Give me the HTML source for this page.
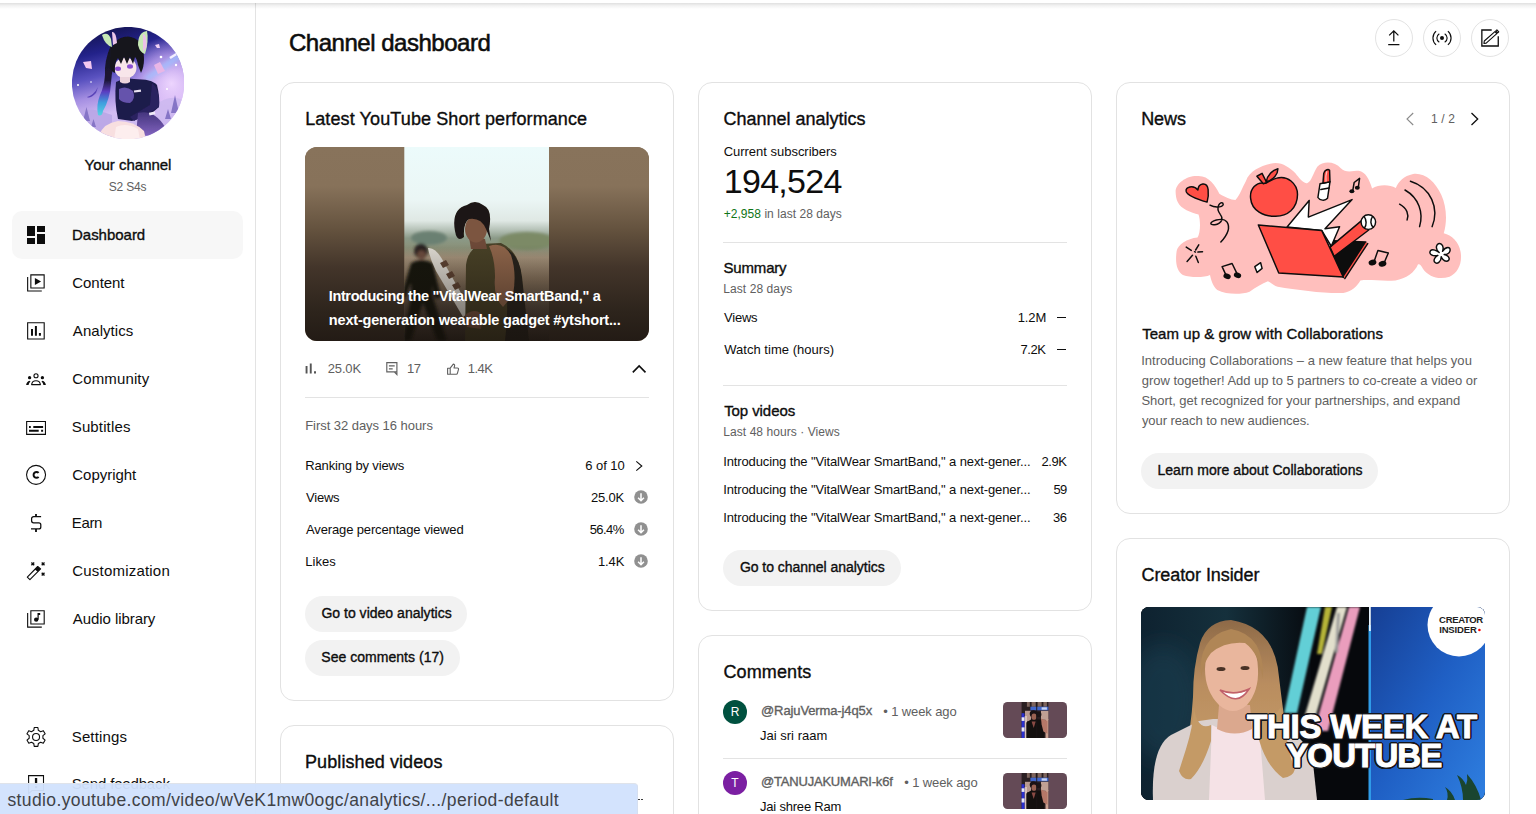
<!DOCTYPE html>
<html lang="en">
<head>
<meta charset="utf-8">
<title>Channel dashboard - YouTube Studio</title>
<style>
*{box-sizing:border-box;margin:0;padding:0}
html,body{width:1536px;height:814px;overflow:hidden;background:#fff}
body{font-family:"Liberation Sans",sans-serif;color:#0d0d0d;position:relative;font-size:13px}
.abs{position:absolute}
.t{position:absolute;white-space:nowrap}
.m{-webkit-text-stroke:0.35px currentColor}
.g{color:#606060}
.b{font-weight:bold}
.w{color:#fff}
.topshadow{position:absolute;left:0;top:3px;width:1536px;height:6px;background:linear-gradient(rgba(0,0,0,0.12),rgba(0,0,0,0.05) 45%,rgba(0,0,0,0))}
.side{position:absolute;left:0;top:3px;width:256px;height:811px;border-right:1px solid #e3e3e3;background:#fff}
.nav{position:absolute;left:12px;width:231px;height:48px;border-radius:10px}
.nav.sel{background:#f7f7f7}
.nav svg{position:absolute;left:12px;top:12px;width:24px;height:24px}
.card{position:absolute;width:394px;border:1px solid #e2e2e2;border-radius:14px;background:#fff}
.btn{position:absolute;height:36px;border-radius:18px;background:#f2f2f2}
.hr{position:absolute;height:1px;background:#e3e3e3}
.circ{position:absolute;width:38px;height:38px;border-radius:50%;border:1px solid #e3e3e3;top:19px}
.circ svg{position:absolute;left:6px;top:6px;width:24px;height:24px}
.status{position:absolute;left:0;top:783px;width:638px;height:31px;background:rgba(209,226,253,0.955);border-top:1px solid #dfe3ea;border-right:1px solid #d5dff0;border-top-right-radius:4px;z-index:5}
.cav{position:absolute;left:723px;width:24px;height:24px;border-radius:50%;color:#fff;text-align:center;line-height:24px;font-size:12px}

</style>
</head>
<body>
<div class="side">
<svg class="abs" style="left:72px;top:24px" width="112" height="112" viewBox="0 0 112 112">
<defs>
<clipPath id="avc"><circle cx="56.100" cy="56.100" r="56.200"/></clipPath>
<linearGradient id="avbg" x1="0.2" y1="0" x2="0.45" y2="1">
<stop offset="0" stop-color="#12124a"/><stop offset="0.22" stop-color="#23228a"/><stop offset="0.42" stop-color="#5a52c0"/><stop offset="0.58" stop-color="#a58fe2"/><stop offset="0.75" stop-color="#d3bdf3"/><stop offset="1" stop-color="#c9b6ee"/>
</linearGradient>
<radialGradient id="avglow" cx="0.88" cy="0.5" r="0.42"><stop offset="0" stop-color="#f0d8ff" stop-opacity="0.95"/><stop offset="0.6" stop-color="#d6b4f6" stop-opacity="0.6"/><stop offset="1" stop-color="#c9a8f5" stop-opacity="0"/></radialGradient>
<linearGradient id="avhair" x1="0" y1="0" x2="0" y2="1"><stop offset="0" stop-color="#14121e"/><stop offset="0.5" stop-color="#1c1838"/><stop offset="0.66" stop-color="#5a3cc0"/><stop offset="0.82" stop-color="#3f9ede"/><stop offset="1" stop-color="#58d2e2"/></linearGradient>
<linearGradient id="avskirt" x1="0" y1="0" x2="0" y2="1"><stop offset="0" stop-color="#45357e"/><stop offset="1" stop-color="#8466c2"/></linearGradient>
<filter id="avb" x="-10%%" y="-10%%" width="120%%" height="120%%"><feGaussianBlur stdDeviation="0.550"/></filter>
<filter id="avb2" x="-30%%" y="-30%%" width="160%%" height="160%%"><feGaussianBlur stdDeviation="2.200"/></filter>
</defs>
<g clip-path="url(#avc)">
<rect width="113" height="113" fill="url(#avbg)"/>
<rect width="113" height="113" fill="url(#avglow)"/>
<path d="M72 50 Q88 40 100 30 Q106 26 112 22 L112 30 Q96 40 76 54Z" fill="#9fc0ff" opacity="0.8" filter="url(#avb2)"/>
<path d="M98 31 Q104 27 110 24" stroke="#f4f0ff" stroke-width="2.500" fill="none" filter="url(#avb)"/>
<path d="M0 86 Q16 78 40 88 L40 113 L0 113Z" fill="#b9a6e6" opacity="0.9"/>
<path d="M84 78 Q98 66 113 74 L113 113 L84 113Z" fill="#cdb9ef" opacity="0.9"/>
<g filter="url(#avb)">
<path d="M11 94 l3.500 -14 l3.500 14z M19 100 l2.500 -8 l2.500 8z M99 86 l4 -18 l4 18z M93 92 l3 -10 l3 10z M4 100 l2 -7 l2 7z" fill="#8675c6"/>
<path d="M39 18 Q32 34 33 48 Q32 60 28 68 Q24 78 26 88 Q30 90 31 84 Q38 72 39 56 Q40 40 45 26Z" fill="url(#avhair)"/>
<path d="M24 66 Q18 72 15 70 Q22 68 26 60Z" fill="#5a44b8"/>
<path d="M44 55 Q54 50 62 52 Q80 52 85 58 Q88 70 87 80 L80 86 L66 92 L60 94 L46 92 Q42 74 44 55Z" fill="#1f1a4c"/>
<path d="M47 62 Q54 58 61 64 Q64 72 58 76 Q50 76 47 72Z" fill="#6553ac"/>
<path d="M80 56 Q88 62 87 80 L62 94 L58 90 L78 78Z" fill="#2a2260"/>
<path d="M66 86 Q82 82 93 100 L90 110 L64 108Z" fill="url(#avskirt)"/>
<rect x="77" y="85" width="6" height="3" fill="#efeaf6" transform="rotate(-12 80 86)"/>
<rect x="62" y="63" width="7" height="2.200" fill="#e9e4f2" transform="rotate(-8 65 64)"/>
<path d="M27 108 Q32 96 46 94 Q62 94 72 104 L74 113 L28 113Z" fill="#f8dfe0"/>
<path d="M44 100 Q54 95 66 102 L68 113 L42 113Z" fill="#fdeeee"/>
<ellipse cx="53.500" cy="41" rx="11" ry="10.500" fill="#f8e6ea"/>
<path d="M48 50 L58 50 L58 55 Q53 58 48 55Z" fill="#ecd4dc"/>
<path d="M38 34 Q38 10 56 9.500 Q72 11 72 32 Q72 40 69 46 L66 38 Q65 32 63 30 L61 37 L58 30 L55 37 L52 30 L49 37 L46 31 Q42 36 43 46 Q37 44 38 34Z" fill="#15131f"/>
<ellipse cx="46" cy="41.700" rx="3" ry="2.200" fill="#8a4fd2"/><ellipse cx="58" cy="39.500" rx="3" ry="2.200" fill="#8a4fd2"/>
<path d="M30 8 Q36 4 39 12 L40 20 Q33 18 30 8Z" fill="#c7e8b6"/><path d="M40 5 Q44 4 45 16 L41 18Z" fill="#ecc6ea"/>
<path d="M66 18 Q66 5 75 4 Q77 14 73 27 Q68 26 66 18Z" fill="#c6e8b4"/><path d="M71 7 Q75 7 74.500 20 L71 25Z" fill="#ebc0e8"/>
<path d="M11 35 L19 34 L20 42 L14 41Z M16 38 L12 33" fill="#f4c8f0"/><path d="M82 38 L88 35 L93 44 L86 47Z" fill="#e9b6e6"/>
<path d="M83 18 l4 -1 l1 4 l-3 0z" fill="#f0d0f4"/>
</g>
<circle cx="89" cy="30" r="1.300" fill="#fff"/><circle cx="6" cy="58" r="1" fill="#fff"/><circle cx="19" cy="55" r="0.800" fill="#fff"/><circle cx="95" cy="62" r="1" fill="#fff"/><circle cx="104" cy="38" r="1.200" fill="#fff"/>
</g>
</svg>
<div class="nav sel" style="top:208px"><svg viewBox="0 0 24 24"><path d="M3 13h8V3H3v10zm0 8h8v-6H3v6zm10 0h8V11h-8v10zm0-18v6h8V3h-8z" fill="#0d0d0d"/></svg></div>
<div class="nav" style="top:256px"><svg viewBox="0 0 24 24"><path d="M6.850 3.850h13.300v13.150h-13.300z" fill="none" stroke="#0d0d0d" stroke-width="1.1"/><path d="M3.650 6v14h14.150" fill="none" stroke="#0d0d0d" stroke-width="1.1"/><path d="M10.900 7v6.900l6.200-3.450z" fill="#0d0d0d"/></svg></div>
<div class="nav" style="top:304px"><svg viewBox="0 0 24 24"><path d="M3.650 3.750h16.550v16.200h-16.550z" fill="none" stroke="#0d0d0d" stroke-width="1.1"/><path d="M7 9.900h2v6.800H7zM10.900 7.100h2v9.600h-2zM14.900 14.100h2v2.600h-2z" fill="#0d0d0d"/></svg></div>
<div class="nav" style="top:352px"><svg viewBox="0 0 24 24"><circle cx="12" cy="8.750" r="2.050" fill="none" stroke="#0d0d0d" stroke-width="1.1"/><path d="M7.600 17.600c.3-2.500 2-3.900 4.400-3.900s4.100 1.400 4.400 3.900z" fill="none" stroke="#0d0d0d" stroke-width="1.1" stroke-linejoin="round"/><circle cx="5.600" cy="10.700" r="1.650" fill="#0d0d0d"/><circle cx="18.400" cy="10.700" r="1.650" fill="#0d0d0d"/><path d="M2.100 18.100c.3-2.300 1.600-3.800 3.500-4.300l.9 1c-1 .7-1.700 1.800-1.900 3.300zM21.900 18.100c-.3-2.300-1.600-3.800-3.500-4.300l-.9 1c1 .7 1.700 1.800 1.900 3.300z" fill="#0d0d0d"/></svg></div>
<div class="nav" style="top:400px"><svg viewBox="0 0 24 24"><path d="M2.650 6.450h18.800v12.900h-18.800z" fill="none" stroke="#0d0d0d" stroke-width="1.1"/><path d="M5 11h1.800v2H5zM9.300 11h9.800v2H9.300zM5 14.800h9.700v1.900H5zM17.100 14.800h2v1.900h-2z" fill="#0d0d0d"/></svg></div>
<div class="nav" style="top:448px"><svg viewBox="0 0 24 24"><circle cx="12.050" cy="11.850" r="9.500" fill="none" stroke="#0d0d0d" stroke-width="1.1"/><path d="M14.600 13.900a2.900 2.900 0 1 1 0-4" fill="none" stroke="#0d0d0d" stroke-width="2"/></svg></div>
<div class="nav" style="top:496px"><svg viewBox="0 0 24 24"><path d="M17.100 5.650H9.600a2 2 0 0 0-2 2v2.200a2 2 0 0 0 2 2h5.200a2 2 0 0 1 2 2v2.100a2 2 0 0 1-2 2H7" fill="none" stroke="#0d0d0d" stroke-width="1.250"/><path d="M12 3v2.600M12 17.900v3" fill="none" stroke="#0d0d0d" stroke-width="1.800"/></svg></div>
<div class="nav" style="top:544px"><svg viewBox="0 0 24 24"><path d="M3.300 18.100 13.700 7.500l2.900 2.400L5.900 20.700z" fill="none" stroke="#0d0d0d" stroke-width="1.1" stroke-linejoin="round"/><path d="M10.900 10.400 13.700 7.500l2.900 2.400-2.900 2.900z" fill="#0d0d0d"/><path d="M7.400 3.400l2.800 2.800m0-2.800L7.400 6.200M17.700 3.400l2.800 2.800m0-2.800l-2.800 2.800M17.700 13.700l2.800 2.800m0-2.800l-2.800 2.800" fill="none" stroke="#0d0d0d" stroke-width="1.350"/></svg></div>
<div class="nav" style="top:592px"><svg viewBox="0 0 24 24"><path d="M6.850 3.750h13.350v13.200h-13.350z" fill="none" stroke="#0d0d0d" stroke-width="1.1"/><path d="M3.650 5.900v14.250h14.150" fill="none" stroke="#0d0d0d" stroke-width="1.1"/><circle cx="12.200" cy="12.600" r="2.200" fill="#0d0d0d"/><path d="M13.500 6h2.700v1.900h-1.500v4.700h-1.200z" fill="#0d0d0d"/></svg></div>
<div class="nav" style="top:710px"><svg viewBox="0 0 24 24"><circle cx="12.050" cy="11.950" r="3.500" fill="none" stroke="#0d0d0d" stroke-width="1.1"/><path d="M14.33 5.33 L13.88 2.53 L10.22 2.53 L9.77 5.33 L7.46 6.67 L4.80 5.65 L2.97 8.82 L5.18 10.61 L5.18 13.29 L2.97 15.08 L4.80 18.25 L7.46 17.23 L9.77 18.57 L10.22 21.37 L13.88 21.37 L14.33 18.57 L16.64 17.23 L19.30 18.25 L21.13 15.08 L18.92 13.29 L18.92 10.61 L21.13 8.82 L19.30 5.65 L16.64 6.67Z" fill="none" stroke="#0d0d0d" stroke-width="1.1" stroke-linejoin="round" stroke-width="1.200"/></svg></div>
<div class="nav" style="top:758px"><svg viewBox="0 0 24 24"><path d="M4.600 2.650h14.900v14.900h-11.500l-3.400 3z" fill="none" stroke="#0d0d0d" stroke-width="1.1"/><path d="M10.900 5h2.300v6.500h-2.300zM10.900 13h2.300v2.200h-2.300z" fill="#0d0d0d"/></svg></div>
</div>


<div class="circ" style="left:1375px"><svg viewBox="0 0 24 24"><path d="M11.800 15.600V5.200M7.200 9.400 11.800 4.900 16.400 9.400M6.200 18.500h11.200" fill="none" stroke="#0d0d0d" stroke-width="1.250"/></svg></div>
<div class="circ" style="left:1423px"><svg viewBox="0 0 24 24"><circle cx="12" cy="12" r="2" fill="#0d0d0d"/><path d="M9.300 7.650a5.100 5.100 0 0 0 0 8.700M14.700 7.650a5.100 5.100 0 0 1 0 8.700M6.100 5.100a9.100 9.100 0 0 0 0 13.800M17.900 5.100a9.100 9.100 0 0 1 0 13.800" fill="none" stroke="#0d0d0d" stroke-width="1.150"/></svg></div>
<div class="circ" style="left:1471px"><svg viewBox="0 0 24 24"><path d="M13.700 4H3.850v16h16.400V10.300" fill="none" stroke="#0d0d0d" stroke-width="1.300"/><path d="M6.300 15 16.900 5.600l1.900 2.100L8.200 17.100l-2.300.4zM17.800 4.800l1.100-1 1.900 2.100-1.100 1z" fill="none" stroke="#0d0d0d" stroke-width="1.100" stroke-linejoin="round"/></svg></div>

<div class="card" style="left:280px;top:82px;height:619px"></div>

<div class="abs" style="left:305px;top:147px;width:344px;height:193.600px;border-radius:12px;overflow:hidden;background:#87725a">
<svg width="344" height="194" viewBox="0 0 344 194" style="position:absolute;left:0;top:0">
<defs>
<linearGradient id="tside" x1="0" y1="0" x2="0" y2="1"><stop offset="0" stop-color="#88735b"/><stop offset="0.2" stop-color="#87725a"/><stop offset="0.42" stop-color="#65533f"/><stop offset="0.62" stop-color="#43352a"/><stop offset="0.85" stop-color="#2d241c"/><stop offset="1" stop-color="#231b15"/></linearGradient>
<linearGradient id="sky" x1="0" y1="0" x2="0" y2="1"><stop offset="0" stop-color="#ecfbfb"/><stop offset="0.27" stop-color="#ebf6f5"/><stop offset="0.38" stop-color="#dfe8e4"/><stop offset="0.43" stop-color="#b3bfb4"/><stop offset="0.47" stop-color="#8b9a88"/><stop offset="0.52" stop-color="#8a9078"/><stop offset="0.57" stop-color="#a3917a"/><stop offset="0.68" stop-color="#84715b"/><stop offset="0.82" stop-color="#574a3e"/><stop offset="1" stop-color="#332a23"/></linearGradient>
<linearGradient id="shade" x1="0" y1="0" x2="0" y2="1"><stop offset="0" stop-color="#140e0a" stop-opacity="0"/><stop offset="0.5" stop-color="#140e0a" stop-opacity="0"/><stop offset="1" stop-color="#140e0a" stop-opacity="0.62"/></linearGradient>
<filter id="tb1" x="-20%%" y="-20%%" width="140%%" height="140%%"><feGaussianBlur stdDeviation="1.600"/></filter>
<filter id="tb2" x="-20%%" y="-20%%" width="140%%" height="140%%"><feGaussianBlur stdDeviation="0.600"/></filter>
<clipPath id="tcl"><rect x="99.300" y="0" width="144.700" height="194"/></clipPath>
</defs>
<rect width="344" height="194" fill="url(#tside)"/>
<rect x="99.300" y="0" width="144.700" height="194" fill="url(#sky)"/>
<g clip-path="url(#tcl)">
<g filter="url(#tb1)">
<ellipse cx="124" cy="91" rx="18" ry="7" fill="#6b8072"/>
<ellipse cx="222" cy="94" rx="28" ry="9" fill="#7b8a66"/>
<ellipse cx="116" cy="104" rx="7" ry="7.500" fill="#2b2420"/>
<ellipse cx="116.500" cy="108" rx="4.500" ry="4.500" fill="#6b4c3c"/>
<path d="M106 116 Q116 110 128 116 L136 150 L130 152 L127 138 L128 150 L142 194 L132 194 L118 156 L106 194 L98 194 L106 150 L106 136 L100 152 L96 150Z" fill="#17130f"/>
</g>
<g filter="url(#tb2)">
<path d="M123 101 Q130 100 137 112 L166 164 L158 170 L131 124 Q125 112 123 101Z" fill="#dcd8d0"/>
<path d="M135 116 l6 -3 l3 5 l-6 3z M141 127 l6 -3 l3 5 l-6 3z M147 138 l6 -3 l3 5 l-6 3z M153 149 l6 -3 l3 5 l-6 3z" fill="#5d4232"/>
<path d="M160 194 L161 118 Q163 102 176 97 L196 96 Q214 104 216 128 L222 194Z" fill="#463f27"/>
<path d="M196 100 Q214 104 217 130 L224 194 L200 194 Q206 150 196 100Z" fill="#25221a"/>
<path d="M184 99 Q198 94 206 108 Q212 126 208 148 L198 160 Q188 150 190 130 Q190 112 184 99Z" fill="#8c6349"/>
<path d="M164 90 L180 92 L182 102 L166 102Z" fill="#6d4a38"/>
<ellipse cx="171" cy="82" rx="11" ry="13.500" fill="#7b5541"/>
<path d="M150 84 Q146 62 162 58 Q170 52 178 58 Q188 62 184 82 L186 94 L181 82 Q176 70 164 72 Q158 76 159 90 Q152 96 150 84Z" fill="#1c1512"/>
<path d="M160 168 Q170 160 178 168 L176 182 L162 180Z" fill="#7a533f"/>
</g>
<rect x="99.300" width="144.700" height="194" fill="url(#shade)"/>
</g>
</svg>
</div>

<svg class="abs" style="left:300px;top:356px" width="200" height="26" viewBox="300 356 200 26">
<path d="M305.600 366h1.900v7.600h-1.900zM309.800 363.600h1.900v10h-1.900zM314 371.300h2v2.300h-2z" fill="#555"/>
<path d="M386.800 362.600h10.100v9.200h-10.100zM394.300 371.800l2.600 2.800v-3" fill="none" stroke="#606060" stroke-width="1.150"/>
<path d="M388.900 365.800h5.800M388.900 368.800h3.800" stroke="#606060" stroke-width="1.300"/>
<path d="M447.600 368.200h2.600v6.100h-2.600zM450.200 368.200l3.100-4.100c.9.100 1.500.9 1.300 1.700l-.6 2.200h3.400c.8 0 1.300.7 1.100 1.400l-1.100 4c-.1.500-.6.900-1.100.9h-6.100z" fill="none" stroke="#606060" stroke-width="1.100" stroke-linejoin="round"/>
</svg>
<svg class="abs" style="left:627px;top:357px" width="24" height="24" viewBox="0 0 24 24"><path d="M5.800 15.400 12.150 9l6.350 6.400" fill="none" stroke="#0d0d0d" stroke-width="1.600"/></svg>
<div class="hr" style="left:305px;top:397px;width:344px"></div>
<svg class="abs" style="left:631px;top:458px" width="16" height="16" viewBox="0 0 16 16"><path d="M5.300 3.300 10.800 8 5.300 12.700" fill="none" stroke="#0d0d0d" stroke-width="1.100"/></svg>
<svg class="abs" style="left:634.300px;top:490.3px" width="14" height="14" viewBox="0 0 14 14"><circle cx="7" cy="7" r="6.800" fill="#909090"/><path d="M7 3.300V10M4.100 7.700 7 10.700 9.900 7.700" fill="none" stroke="#fff" stroke-width="1.500"/></svg>
<svg class="abs" style="left:634.300px;top:522.3px" width="14" height="14" viewBox="0 0 14 14"><circle cx="7" cy="7" r="6.800" fill="#909090"/><path d="M7 3.300V10M4.100 7.700 7 10.700 9.900 7.700" fill="none" stroke="#fff" stroke-width="1.500"/></svg>
<svg class="abs" style="left:634.300px;top:554.3px" width="14" height="14" viewBox="0 0 14 14"><circle cx="7" cy="7" r="6.800" fill="#909090"/><path d="M7 3.300V10M4.100 7.700 7 10.700 9.900 7.700" fill="none" stroke="#fff" stroke-width="1.500"/></svg>

<div class="btn" style="left:305px;top:596px;width:162px"></div>
<div class="btn" style="left:305px;top:640px;width:155px"></div>
<div class="card" style="left:280px;top:725px;height:120px"></div>
<div class="abs" style="left:638.200px;top:798.500px;width:1.700px;height:1.700px;border-radius:1px;background:#222;box-shadow:3px 0 #222"></div>

<div class="card" style="left:698px;top:82px;height:529px"></div>
<div class="hr" style="left:723px;top:242px;width:344px"></div>
<div class="abs" style="left:1057px;top:317px;width:9px;height:1px;background:#0d0d0d"></div>
<div class="abs" style="left:1057px;top:349px;width:9px;height:1px;background:#0d0d0d"></div>
<div class="hr" style="left:723px;top:385px;width:344px"></div>
<div class="btn" style="left:723px;top:550px;width:178px"></div>
<div class="card" style="left:698px;top:635px;height:220px"></div>
<div class="cav" style="top:700px;background:#00513f">R</div>
<div class="hr" style="left:723px;top:758px;width:344px"></div>
<div class="cav" style="top:771px;background:#7b1fa2">T</div>
<svg class="abs" style="left:1003px;top:702px" width="64" height="36" viewBox="0 0 64 36"><defs><clipPath id="ct702"><rect width="64" height="36" rx="4.500"/></clipPath></defs><g clip-path="url(#ct702)"><rect width="64" height="36" fill="#644a56"/>
<rect x="18.600" y="0" width="26.800" height="36" fill="#2a1f22"/>
<rect x="22" y="8.800" width="6" height="10.500" fill="#b99a90"/><rect x="38" y="8.800" width="7.400" height="9" fill="#c0a094"/><rect x="42.500" y="17" width="2.900" height="19" fill="#c9a090"/>
<path d="M23.900 0h2.900v4.700h-2.900zM28.600 0h4.100v4.700h-4.100zM34.500 0h4.100v4.700h-4.100zM40.400 0h3.500v4.700h-3.500z" fill="#7d645c"/>
<rect x="27.400" y="4.700" width="18" height="3.600" fill="#3f66cc"/><rect x="38.600" y="5.300" width="5.300" height="2.400" fill="#c8d4f4"/>
<rect x="21.500" y="14" width="2.500" height="22" fill="#d8c0b8"/>
<rect x="18.600" y="11.200" width="2.900" height="24.800" fill="#2a2fd0"/><rect x="18.600" y="15.300" width="2.900" height="3.600" fill="#e8e8f8"/><rect x="18.600" y="25.400" width="2.900" height="4.100" fill="#e8e8f8"/>
<path d="M23.300 36V20.500l4.700-3h12l2 6.500-1 12z" fill="#14100f"/>
<path d="M38 16.500l6.500 2.400v12.900l-4.100-2.300-1.800-7.100z" fill="#b57868"/>
<circle cx="35.700" cy="12.400" r="2.700" fill="#1c1517"/>
<ellipse cx="30.400" cy="11.800" rx="3.700" ry="3.600" fill="#1a1214"/><ellipse cx="31" cy="14.700" rx="2.500" ry="3.100" fill="#9a6252"/>
<path d="M28.600 19.500h4.100l-2 6.500z" fill="#8a4a44"/>
<rect x="33.300" y="0" width="0.900" height="36" fill="#1a1416"/>
</g></svg>
<svg class="abs" style="left:1003px;top:773px" width="64" height="36" viewBox="0 0 64 36"><defs><clipPath id="ct773"><rect width="64" height="36" rx="4.500"/></clipPath></defs><g clip-path="url(#ct773)"><rect width="64" height="36" fill="#644a56"/>
<rect x="18.600" y="0" width="26.800" height="36" fill="#2a1f22"/>
<rect x="22" y="8.800" width="6" height="10.500" fill="#b99a90"/><rect x="38" y="8.800" width="7.400" height="9" fill="#c0a094"/><rect x="42.500" y="17" width="2.900" height="19" fill="#c9a090"/>
<path d="M23.900 0h2.900v4.700h-2.900zM28.600 0h4.100v4.700h-4.100zM34.500 0h4.100v4.700h-4.100zM40.400 0h3.500v4.700h-3.500z" fill="#7d645c"/>
<rect x="27.400" y="4.700" width="18" height="3.600" fill="#3f66cc"/><rect x="38.600" y="5.300" width="5.300" height="2.400" fill="#c8d4f4"/>
<rect x="21.500" y="14" width="2.500" height="22" fill="#d8c0b8"/>
<rect x="18.600" y="11.200" width="2.900" height="24.800" fill="#2a2fd0"/><rect x="18.600" y="15.300" width="2.900" height="3.600" fill="#e8e8f8"/><rect x="18.600" y="25.400" width="2.900" height="4.100" fill="#e8e8f8"/>
<path d="M23.300 36V20.500l4.700-3h12l2 6.500-1 12z" fill="#14100f"/>
<path d="M38 16.500l6.500 2.400v12.900l-4.100-2.300-1.800-7.100z" fill="#b57868"/>
<circle cx="35.700" cy="12.400" r="2.700" fill="#1c1517"/>
<ellipse cx="30.400" cy="11.800" rx="3.700" ry="3.600" fill="#1a1214"/><ellipse cx="31" cy="14.700" rx="2.500" ry="3.100" fill="#9a6252"/>
<path d="M28.600 19.500h4.100l-2 6.500z" fill="#8a4a44"/>
<rect x="33.300" y="0" width="0.900" height="36" fill="#1a1416"/>
</g></svg>

<div class="card" style="left:1116px;top:82px;height:432px"></div>
<svg class="abs" style="left:1398px;top:107px" width="24" height="24" viewBox="0 0 24 24"><path d="M15.200 6 9 12l6.200 6" fill="none" stroke="#8a8a8a" stroke-width="1.100"/></svg>
<svg class="abs" style="left:1463px;top:107px" width="24" height="24" viewBox="0 0 24 24"><path d="M8.500 6l6.200 6-6.200 6" fill="none" stroke="#0d0d0d" stroke-width="1.300"/></svg>

<svg class="abs" style="left:1160px;top:150px" width="320" height="160" viewBox="0 0 1536 768">
<path d="M75 200 C 75 160 130 120 185 125 C 235 125 265 170 285 210 C 310 225 340 240 362 240 C 385 215 395 180 412 150 C 430 100 480 78 530 66 C 575 52 620 80 650 112 C 668 135 690 165 708 158 C 728 150 735 110 755 80 C 785 50 840 55 868 88 C 890 112 925 100 955 100 C 985 105 1005 140 1018 185 C 1050 165 1100 165 1132 182 C 1145 150 1170 125 1215 115 C 1270 108 1320 150 1350 215 C 1375 270 1380 340 1362 400 C 1400 410 1435 440 1443 490 C 1452 545 1430 590 1390 608 C 1340 625 1290 610 1262 570 C 1255 555 1245 545 1238 550 C 1225 585 1180 620 1130 626 C 1070 632 1010 620 962 626 C 945 655 920 680 880 686 C 800 690 660 672 565 656 C 545 650 530 635 518 630 C 490 640 460 660 430 680 C 390 695 320 695 275 672 C 250 650 245 620 240 600 C 215 612 150 615 110 600 C 80 580 72 540 80 485 C 85 455 130 425 180 420 C 195 395 195 340 185 310 C 150 300 100 285 85 250 C 78 235 75 215 75 200Z" fill="#ffbfbd"/>
<path d="M226 250 C 185 238 135 222 126 200 C 118 176 162 166 182 192 C 184 158 226 150 231 190 C 234 215 230 236 226 250Z" fill="#ff4e45" stroke="#0d0d0d" stroke-width="7" stroke-linejoin="round" stroke-linecap="round"/>
<path d="M240 265 C 270 282 312 272 302 256 C 292 244 262 272 290 310 C 318 345 262 368 246 356 C 232 344 300 318 322 346 C 342 378 312 420 292 442" fill="none" stroke="#0d0d0d" stroke-width="7" stroke-linejoin="round" stroke-linecap="round"/>
<path d="M126 466 L150 482 M186 455 L171 480 M204 488 L182 490 M130 535 L156 505 M184 540 L172 510 M166 488 l4 2" fill="none" stroke="#0d0d0d" stroke-width="7" stroke-linejoin="round" stroke-linecap="round" stroke-width="5.500"/>
<path d="M318 603 L298 560 L346 545 L372 598" fill="none" stroke="#0d0d0d" stroke-width="7" stroke-linejoin="round" stroke-linecap="round" stroke-width="11"/>
<ellipse cx="322" cy="606" rx="18" ry="13" fill="#0d0d0d" transform="rotate(20 322 606)"/><ellipse cx="372" cy="601" rx="18" ry="13" fill="#0d0d0d" transform="rotate(20 372 601)"/>
<path d="M455 560 L483 541 L490 568 L466 588Z" fill="#fff" stroke="#0d0d0d" stroke-width="7" stroke-linejoin="round" stroke-linecap="round" stroke-width="5.500"/>
<path d="M505 160 C 462 150 430 188 435 232 C 440 292 500 320 550 318 C 612 320 660 280 660 214 C 660 160 610 120 560 135 C 540 140 520 155 505 160Z" fill="#ff4e45" stroke="#0d0d0d" stroke-width="7" stroke-linejoin="round" stroke-linecap="round"/>
<path d="M465 126 L490 112 L512 156 L496 162Z" fill="#ff4e45" stroke="#0d0d0d" stroke-width="7" stroke-linejoin="round" stroke-linecap="round"/>
<path d="M510 152 C 515 120 540 96 566 90 C 566 116 546 142 510 152Z" fill="#ff4e45" stroke="#0d0d0d" stroke-width="7" stroke-linejoin="round" stroke-linecap="round"/>
<path d="M768 162 L816 152 L804 232 C 792 246 766 242 758 228Z" fill="#fff" stroke="#0d0d0d" stroke-width="7" stroke-linejoin="round" stroke-linecap="round"/>
<path d="M772 190 L812 182" fill="none" stroke="#0d0d0d" stroke-width="7" stroke-linejoin="round" stroke-linecap="round" stroke-width="5"/>
<path d="M786 112 C 790 96 806 90 814 97 L816 152 L782 160Z" fill="#ff4e45" stroke="#0d0d0d" stroke-width="7" stroke-linejoin="round" stroke-linecap="round"/>
<path d="M801 102 C 796 116 795 135 797 152" fill="none" stroke="#ffbfbd" stroke-width="6"/>
<path d="M925 196 L932 156 L958 136 L952 178" fill="none" stroke="#0d0d0d" stroke-width="7" stroke-linejoin="round" stroke-linecap="round" stroke-width="8"/>
<ellipse cx="921" cy="198" rx="12" ry="10" fill="#0d0d0d"/><ellipse cx="947" cy="181" rx="12" ry="10" fill="#0d0d0d"/>
<path d="M832 436 L988 442 L880 612 L828 500Z" fill="#0d0d0d" stroke="#0d0d0d" stroke-width="7" stroke-linejoin="round" stroke-linecap="round"/>
<path d="M992 446 L884 612" fill="none" stroke="#ff4e45" stroke-width="8"/>
<path d="M997 449 L887 617" fill="none" stroke="#0d0d0d" stroke-width="7" stroke-linejoin="round" stroke-linecap="round" stroke-width="4"/>
<path d="M816 466 L966 340 L1002 384 L836 510Z" fill="#ff4e45" stroke="#0d0d0d" stroke-width="7" stroke-linejoin="round" stroke-linecap="round"/>
<path d="M610 370 L716 242 L712 322 L922 238 L792 378 L862 368 L822 462 L776 386Z" fill="#fff" stroke="#0d0d0d" stroke-width="7" stroke-linejoin="round" stroke-linecap="round"/>
<path d="M472 360 L776 386 L880 610 L570 590Z" fill="#ff4e45" stroke="#0d0d0d" stroke-width="7" stroke-linejoin="round" stroke-linecap="round"/>
<circle cx="1000" cy="346" r="35" fill="#fff" stroke="#0d0d0d" stroke-width="7" stroke-linejoin="round" stroke-linecap="round"/>
<path d="M980 320 C 992 335 992 360 982 374 M1020 320 C 1008 336 1010 360 1024 370" fill="none" stroke="#0d0d0d" stroke-width="7" stroke-linejoin="round" stroke-linecap="round" stroke-width="4"/>
<path d="M1026 540 L1046 482 L1096 494 L1074 546" fill="none" stroke="#0d0d0d" stroke-width="7" stroke-linejoin="round" stroke-linecap="round" stroke-width="11"/>
<ellipse cx="1020" cy="540" rx="19" ry="14" fill="#0d0d0d" transform="rotate(-15 1020 540)"/><ellipse cx="1068" cy="546" rx="19" ry="14" fill="#0d0d0d" transform="rotate(-15 1068 546)"/>
<path d="M1150 260 C 1186 280 1196 310 1186 336 M1176 192 C 1242 230 1266 300 1246 368 M1202 150 C 1300 180 1342 280 1306 368" fill="none" stroke="#0d0d0d" stroke-width="7" stroke-linejoin="round" stroke-linecap="round"/>
<path d="M1340 492 C 1315 470 1330 440 1350 452 C 1362 460 1360 478 1356 486 C 1372 462 1396 462 1392 484 C 1390 498 1372 502 1364 502 C 1392 508 1396 532 1374 534 C 1362 534 1352 520 1350 512 C 1350 536 1330 552 1318 538 C 1310 526 1324 510 1334 506 C 1310 512 1288 500 1298 484 C 1308 472 1330 484 1340 492Z" fill="#fff" stroke="#0d0d0d" stroke-width="7" stroke-linejoin="round" stroke-linecap="round"/>
</svg>

<div class="btn" style="left:1141px;top:453px;width:237px"></div>
<div class="card" style="left:1116px;top:538px;height:320px"></div>

<div class="abs" style="left:1141px;top:607px;width:344px;height:193px;border-radius:8px;overflow:hidden;background:#0b1118">
<svg width="344" height="193" viewBox="0 0 344 193" style="position:absolute;left:0;top:0">
<defs>
<linearGradient id="cibl" x1="0" y1="0" x2="1" y2="1"><stop offset="0" stop-color="#163f94"/><stop offset="0.5" stop-color="#1f5fc4"/><stop offset="1" stop-color="#2f7fe0"/></linearGradient>
<linearGradient id="cidk" x1="0" y1="0" x2="1" y2="0"><stop offset="0" stop-color="#0e2230"/><stop offset="0.5" stop-color="#15303c"/><stop offset="1" stop-color="#070b10"/></linearGradient>
<filter id="cib1" x="-10%%" y="-10%%" width="120%%" height="120%%"><feGaussianBlur stdDeviation="0.900"/></filter><filter id="cib2" x="-10%%" y="-10%%" width="120%%" height="120%%"><feGaussianBlur stdDeviation="0.500"/></filter><filter id="cib3" x="-50%%" y="-50%%" width="200%%" height="200%%"><feGaussianBlur stdDeviation="12"/></filter>
<linearGradient id="cihair" x1="0" y1="0" x2="0" y2="1"><stop offset="0" stop-color="#8e6a48"/><stop offset="0.4" stop-color="#b98d5f"/><stop offset="1" stop-color="#caa06c"/></linearGradient>
</defs>
<rect width="344" height="193" fill="#06080c"/>
<rect width="170" height="193" fill="url(#cidk)"/>
<ellipse cx="22" cy="95" rx="40" ry="60" fill="#1d4254" opacity="0.55" filter="url(#cib3)"/>
<rect x="229.500" width="114.500" height="193" fill="url(#cibl)"/>
<rect x="227.500" y="18" width="2.500" height="175" fill="#2f9be8"/>
<rect x="228" y="0" width="1.800" height="24" fill="#e8f4ff"/>
<g filter="url(#cib1)">
<path d="M166 0 L180 0 L156 106 L143 106Z" fill="#62cfd6"/>
<path d="M184 0 L191 0 L181 47 L176 47Z" fill="#b5b437"/>
<path d="M196 0 L206 0 L175 108 L164 108Z" fill="#e2dfcc"/>
<path d="M208 0 L219 0 L187 124 L173 124Z" fill="#ea9dbd"/>
<path d="M196 6 l3 0 l-2 40 l-3 0z" fill="#9a9a9a"/>
</g>
<g fill="#1a4530"><path d="M322 193 Q322 180 316 168 Q322 171 325 178 Q327 173 326 167 Q336 178 340 193Z"/><path d="M306 193 Q308 186 304 180 Q311 184 314 193Z"/><path d="M262 193 Q276 189 292 192 L292 193Z"/></g>
<g filter="url(#cib2)">
<path d="M90 13 Q66 14 59 36 Q52 60 52 90 Q50 120 45 142 Q42 156 38 164 Q42 174 50 172 Q62 160 70 132 L118 133 Q126 160 142 171 Q152 170 154 162 Q148 146 146 130 Q142 104 138 70 Q134 20 90 13Z" fill="url(#cihair)"/>
<path d="M12 193 Q10 140 30 128 L58 114 L72 112 L118 112 L140 120 Q166 130 172 156 L176 193Z" fill="#dad0ce"/>
<path d="M71 118 Q92 130 118 118 L124 193 L68 193Z" fill="#f5e2e6"/>
<path d="M78 98 L109 98 L111 122 Q94 131 76 122Z" fill="#dba88e"/>
<path d="M64 62 Q64 34 90 31 Q117 34 117 62 Q118 84 106 98 Q92 110 78 98 Q64 84 64 62Z" fill="#e9b69d"/>
<path d="M60 70 Q56 30 90 22 Q124 28 122 72 Q118 46 104 36 Q84 34 70 46 Q62 56 60 70Z" fill="#b08656"/>
<path d="M80 84 Q93 90 107 83 Q96 99 80 84Z" fill="#fff"/>
<path d="M79 83 Q93 89 108 82 Q96 101 79 83Z" fill="none" stroke="#c0606a" stroke-width="1.600"/>
<ellipse cx="80" cy="62" rx="4.500" ry="2" fill="#4a3328"/><ellipse cx="104" cy="61" rx="4.500" ry="2" fill="#4a3328"/>
<path d="M45 142 Q52 120 53 100 Q56 124 70 118 L70 134 Q62 160 50 172 Q42 174 38 164Z" fill="#c49a66"/>
<path d="M118 133 L116 112 Q128 118 140 100 Q142 120 146 132 Q148 148 154 162 Q152 170 142 171 Q126 160 118 133Z" fill="#c49a66"/>
</g>
<circle cx="318" cy="18" r="31.500" fill="#fff"/>
<circle cx="338.400" cy="23" r="1.300" fill="#ff0000"/>
</svg>
<div class="t" style="left:106.1px;top:102px;font-size:33px;font-weight:bold;line-height:36px;height:36px;color:#fff;-webkit-text-stroke:1px #fff;text-shadow:2.00px 0.00px 0 #15151a,1.85px 0.77px 0 #15151a,1.41px 1.41px 0 #15151a,0.77px 1.85px 0 #15151a,0.00px 2.00px 0 #15151a,-0.77px 1.85px 0 #15151a,-1.41px 1.41px 0 #15151a,-1.85px 0.77px 0 #15151a,-2.00px 0.00px 0 #15151a,-1.85px -0.77px 0 #15151a,-1.41px -1.41px 0 #15151a,-0.77px -1.85px 0 #15151a,-0.00px -2.00px 0 #15151a,0.77px -1.85px 0 #15151a,1.41px -1.41px 0 #15151a,1.85px -0.77px 0 #15151a;letter-spacing:-0.25px" id="ci1">THIS WEEK AT</div>
<div class="t" style="left:145.2px;top:131px;font-size:33px;font-weight:bold;line-height:36px;height:36px;color:#fff;-webkit-text-stroke:1px #fff;text-shadow:2.00px 0.00px 0 #15151a,1.85px 0.77px 0 #15151a,1.41px 1.41px 0 #15151a,0.77px 1.85px 0 #15151a,0.00px 2.00px 0 #15151a,-0.77px 1.85px 0 #15151a,-1.41px 1.41px 0 #15151a,-1.85px 0.77px 0 #15151a,-2.00px 0.00px 0 #15151a,-1.85px -0.77px 0 #15151a,-1.41px -1.41px 0 #15151a,-0.77px -1.85px 0 #15151a,-0.00px -2.00px 0 #15151a,0.77px -1.85px 0 #15151a,1.41px -1.41px 0 #15151a,1.85px -0.77px 0 #15151a;letter-spacing:-0.87px" id="ci2">YOUTUBE</div>
</div>
<div class="topshadow"></div>
<div class="status"></div>

<div class="t m" id="yc" style="left:84.57px;top:155px;font-size:15px;line-height:20px;height:20px;letter-spacing:-0.012px;">Your channel</div>
<div class="t g" id="s2" style="left:108.76px;top:177px;font-size:12px;line-height:20px;height:20px;letter-spacing:-0.207px;">S2 S4s</div>
<div class="t m" id="n1" style="left:72.00px;top:225px;font-size:15px;line-height:20px;height:20px;letter-spacing:-0.024px;">Dashboard</div>
<div class="t " id="n2" style="left:72.29px;top:273px;font-size:15px;line-height:20px;height:20px;letter-spacing:-0.048px;">Content</div>
<div class="t " id="n3" style="left:72.84px;top:321px;font-size:15px;line-height:20px;height:20px;letter-spacing:0.047px;">Analytics</div>
<div class="t " id="n4" style="left:72.29px;top:369px;font-size:15px;line-height:20px;height:20px;letter-spacing:0.128px;">Community</div>
<div class="t " id="n5" style="left:71.74px;top:417px;font-size:15px;line-height:20px;height:20px;letter-spacing:0.139px;">Subtitles</div>
<div class="t " id="n6" style="left:72.29px;top:465px;font-size:15px;line-height:20px;height:20px;letter-spacing:-0.026px;">Copyright</div>
<div class="t " id="n7" style="left:71.83px;top:513px;font-size:15px;line-height:20px;height:20px;letter-spacing:-0.358px;">Earn</div>
<div class="t " id="n8" style="left:72.29px;top:561px;font-size:15px;line-height:20px;height:20px;letter-spacing:0.203px;">Customization</div>
<div class="t " id="n9" style="left:72.84px;top:609px;font-size:15px;line-height:20px;height:20px;letter-spacing:-0.069px;">Audio library</div>
<div class="t " id="n10" style="left:71.74px;top:727px;font-size:15px;line-height:20px;height:20px;letter-spacing:0.145px;">Settings</div>
<div class="t " id="n11" style="left:71.74px;top:774px;font-size:15px;line-height:20px;height:20px;letter-spacing:-0.161px;">Send feedback</div>
<div class="t " id="title" style="left:288.90px;top:27px;font-size:24px;line-height:32px;height:32px;letter-spacing:-0.472px;-webkit-text-stroke:0.55px #0d0d0d">Channel dashboard</div>
<div class="t m" id="h1" style="left:305.13px;top:107px;font-size:18px;line-height:24px;height:24px;letter-spacing:0.112px;">Latest YouTube Short performance</div>
<div class="t b w" id="th1" style="left:328.75px;top:286px;font-size:14.5px;line-height:20px;height:20px;letter-spacing:-0.369px;">Introducing the "VitalWear SmartBand," a</div>
<div class="t b w" id="th2" style="left:328.85px;top:310px;font-size:14.5px;line-height:20px;height:20px;letter-spacing:-0.188px;">next-generation wearable gadget #ytshort...</div>
<div class="t g" id="st1" style="left:327.77px;top:359px;font-size:13px;line-height:20px;height:20px;letter-spacing:-0.163px;">25.0K</div>
<div class="t g" id="st2" style="left:407.03px;top:359px;font-size:13px;line-height:20px;height:20px;letter-spacing:-0.467px;">17</div>
<div class="t g" id="st3" style="left:467.67px;top:359px;font-size:13px;line-height:20px;height:20px;letter-spacing:-0.474px;">1.4K</div>
<div class="t g" id="f32" style="left:305.20px;top:416px;font-size:13px;line-height:20px;height:20px;letter-spacing:-0.044px;">First 32 days 16 hours</div>
<div class="t " id="r1a" style="left:305.20px;top:456px;font-size:13px;line-height:20px;height:20px;letter-spacing:-0.136px;">Ranking by views</div>
<div class="t " id="r1b" style="left:585.32px;top:456px;font-size:13px;line-height:20px;height:20px;letter-spacing:-0.048px;">6 of 10</div>
<div class="t " id="r2a" style="left:306.10px;top:488px;font-size:13px;line-height:20px;height:20px;letter-spacing:-0.231px;">Views</div>
<div class="t " id="r2b" style="left:591.04px;top:488px;font-size:13px;line-height:20px;height:20px;letter-spacing:-0.212px;">25.0K</div>
<div class="t " id="r3a" style="left:306.01px;top:520px;font-size:13px;line-height:20px;height:20px;letter-spacing:-0.136px;">Average percentage viewed</div>
<div class="t " id="r3b" style="left:589.71px;top:520px;font-size:13px;line-height:20px;height:20px;letter-spacing:-0.566px;">56.4%</div>
<div class="t " id="r4a" style="left:305.20px;top:552px;font-size:13px;line-height:20px;height:20px;letter-spacing:0.047px;">Likes</div>
<div class="t " id="r4b" style="left:598.03px;top:552px;font-size:13px;line-height:20px;height:20px;letter-spacing:-0.126px;">1.4K</div>
<div class="t m" id="b1" style="left:321.40px;top:603px;font-size:14px;line-height:20px;height:20px;letter-spacing:0.017px;">Go to video analytics</div>
<div class="t m" id="b2" style="left:321.31px;top:647px;font-size:14px;line-height:20px;height:20px;letter-spacing:0.032px;">See comments (17)</div>
<div class="t m" id="pv" style="left:305.01px;top:750px;font-size:18px;line-height:24px;height:24px;letter-spacing:0.088px;">Published videos</div>
<div class="t m" id="h2" style="left:723.49px;top:107px;font-size:18px;line-height:24px;height:24px;letter-spacing:-0.006px;">Channel analytics</div>
<div class="t " id="cs" style="left:723.63px;top:142px;font-size:13px;line-height:20px;height:20px;letter-spacing:-0.014px;">Current subscribers</div>
<div class="t " id="big" style="left:723.73px;top:159px;font-size:34px;line-height:45px;height:45px;letter-spacing:-0.706px;">194,524</div>
<div class="t g" id="in28" style="left:723.66px;top:204px;font-size:12px;line-height:20px;height:20px;letter-spacing:0.051px;"><span style="color:#107516">+2,958</span> in last 28 days</div>
<div class="t m" id="sum" style="left:723.52px;top:258px;font-size:15px;line-height:20px;height:20px;letter-spacing:-0.178px;">Summary</div>
<div class="t g" id="l28" style="left:723.29px;top:279px;font-size:12px;line-height:20px;height:20px;letter-spacing:0.080px;">Last 28 days</div>
<div class="t " id="v1a" style="left:724.10px;top:308px;font-size:13px;line-height:20px;height:20px;letter-spacing:-0.231px;">Views</div>
<div class="t " id="v1b" style="left:1017.74px;top:308px;font-size:13px;line-height:20px;height:20px;letter-spacing:-0.110px;">1.2M</div>
<div class="t " id="v2a" style="left:724.20px;top:340px;font-size:13px;line-height:20px;height:20px;letter-spacing:0.033px;">Watch time (hours)</div>
<div class="t " id="v2b" style="left:1020.53px;top:340px;font-size:13px;line-height:20px;height:20px;letter-spacing:-0.464px;">7.2K</div>
<div class="t m" id="tv" style="left:724.18px;top:401px;font-size:15px;line-height:20px;height:20px;letter-spacing:-0.081px;">Top videos</div>
<div class="t g" id="l48" style="left:723.29px;top:422px;font-size:12px;line-height:20px;height:20px;letter-spacing:0.067px;">Last 48 hours · Views</div>
<div class="t " id="tv1" style="left:723.20px;top:452px;font-size:13px;line-height:20px;height:20px;letter-spacing:-0.120px;">Introducing the "VitalWear SmartBand," a next-gener...</div>
<div class="t " id="tv1b" style="left:1041.53px;top:452px;font-size:13px;line-height:20px;height:20px;letter-spacing:-0.475px;">2.9K</div>
<div class="t " id="tv2" style="left:723.20px;top:480px;font-size:13px;line-height:20px;height:20px;letter-spacing:-0.120px;">Introducing the "VitalWear SmartBand," a next-gener...</div>
<div class="t " id="tv2b" style="left:1053.41px;top:480px;font-size:13px;line-height:20px;height:20px;letter-spacing:-0.742px;">59</div>
<div class="t " id="tv3" style="left:723.20px;top:508px;font-size:13px;line-height:20px;height:20px;letter-spacing:-0.120px;">Introducing the "VitalWear SmartBand," a next-gener...</div>
<div class="t " id="tv3b" style="left:1053.05px;top:508px;font-size:13px;line-height:20px;height:20px;letter-spacing:-0.541px;">36</div>
<div class="t m" id="b3" style="left:739.89px;top:557px;font-size:14px;line-height:20px;height:20px;letter-spacing:-0.031px;">Go to channel analytics</div>
<div class="t m" id="cm" style="left:723.49px;top:660px;font-size:18px;line-height:24px;height:24px;letter-spacing:0.124px;">Comments</div>
<div class="t m g" id="c1n" style="left:761.04px;top:701px;font-size:13px;line-height:20px;height:20px;letter-spacing:-0.117px;">@RajuVerma-j4q5x</div>
<div class="t g" id="c1t" style="left:883.26px;top:702px;font-size:13px;line-height:20px;height:20px;letter-spacing:-0.115px;">• 1 week ago</div>
<div class="t " id="c1x" style="left:759.93px;top:726px;font-size:13px;line-height:20px;height:20px;letter-spacing:0.023px;">Jai sri raam</div>
<div class="t m g" id="c2n" style="left:761.04px;top:772px;font-size:13px;line-height:20px;height:20px;letter-spacing:-0.203px;">@TANUJAKUMARI-k6f</div>
<div class="t g" id="c2t" style="left:904.26px;top:773px;font-size:13px;line-height:20px;height:20px;letter-spacing:-0.115px;">• 1 week ago</div>
<div class="t " id="c2x" style="left:759.93px;top:797px;font-size:13px;line-height:20px;height:20px;letter-spacing:-0.193px;">Jai shree Ram</div>
<div class="t m" id="nw" style="left:1141.13px;top:107px;font-size:18px;line-height:24px;height:24px;letter-spacing:-0.048px;">News</div>
<div class="t g" id="pg" style="left:1430.89px;top:109px;font-size:12px;line-height:20px;height:20px;letter-spacing:0.191px;">1 / 2</div>
<div class="t m" id="tu" style="left:1142.18px;top:324px;font-size:15px;line-height:20px;height:20px;letter-spacing:0.047px;">Team up &amp; grow with Collaborations</div>
<div class="t g" id="p1" style="left:1141.20px;top:351px;font-size:13px;line-height:20px;height:20px;letter-spacing:0.033px;">Introducing Collaborations – a new feature that helps you</div>
<div class="t g" id="p2" style="left:1141.78px;top:371px;font-size:13px;line-height:20px;height:20px;letter-spacing:-0.022px;">grow together! Add up to 5 partners to co-create a video or</div>
<div class="t g" id="p3" style="left:1141.43px;top:391px;font-size:13px;line-height:20px;height:20px;letter-spacing:-0.051px;">Short, get recognized for your partnerships, and expand</div>
<div class="t g" id="p4" style="left:1141.95px;top:411px;font-size:13px;line-height:20px;height:20px;letter-spacing:-0.076px;">your reach to new audiences.</div>
<div class="t m" id="b4" style="left:1157.41px;top:460px;font-size:14px;line-height:20px;height:20px;letter-spacing:0.039px;">Learn more about Collaborations</div>
<div class="t m" id="ci" style="left:1141.49px;top:563px;font-size:18px;line-height:24px;height:24px;letter-spacing:-0.078px;">Creator Insider</div>
<div class="t b" id="cib1" style="left:1439.12px;top:610px;font-size:9.5px;line-height:20px;height:20px;letter-spacing:-0.344px;color:#212121">CREATOR</div>
<div class="t b" id="cib2" style="left:1439.14px;top:620px;font-size:9.5px;line-height:20px;height:20px;letter-spacing:-0.139px;color:#212121">INSIDER</div>
<div class="t " id="status" style="left:7.50px;top:789px;font-size:17.5px;line-height:23px;height:23px;letter-spacing:0.374px;color:#3f4246;z-index:6">studio.youtube.com/video/wVeK1mw0ogc/analytics/.../period-default</div>
</body>
</html>
